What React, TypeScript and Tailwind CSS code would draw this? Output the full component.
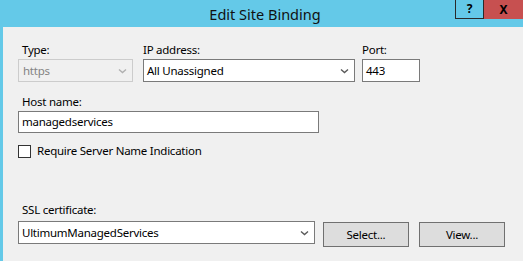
import React from "react";

const Chevron = ({ color = "#5a5a5a" }: { color?: string }) => (
  <svg width="9" height="6" viewBox="0 0 9 6" className="shrink-0">
    <path d="M1 1.5 L4.5 4.5 L8 1.5" fill="none" stroke={color} strokeWidth="1.4" />
  </svg>
);

export default function App() {
  return (
    <div
      className="w-[523px] h-[261px] bg-[#64c9e8] flex flex-col overflow-hidden text-[11.5px] tracking-[-0.25px] text-black"
      style={{ fontFamily: '"Noto Sans", "Segoe UI", sans-serif' }}
    >
      <div className="h-[27px] relative flex items-start justify-center shrink-0">
        <div className="text-[14.5px] tracking-normal leading-[20px] mt-[4px] ml-[7px] text-[#111]">Edit Site Binding</div>
        <div className="absolute right-0 top-0 flex h-[19px]">
          <div className="w-[29px] h-[19px] border-l border-b border-r border-[#2a2a2a] flex items-center justify-center font-bold text-[12px] leading-none">
            ?
          </div>
          <div className="w-[39px] h-[19px] bg-[#c75050] flex items-center justify-center font-bold text-[12px] leading-none">
            X
          </div>
        </div>
      </div>
      <div className="flex-1 ml-[3px] bg-[#f0f0f0] pl-[15px] pt-[15px] flex flex-col">
        <div className="flex">
          <div className="flex flex-col w-[115px]">
            <div className="leading-[16px] pl-[4px] mb-[1px]">Type:</div>
            <div className="h-[23px] border border-[#cccccc] bg-[#f0f0f0] flex items-center justify-between pl-[4px] pr-[5px] text-[#838383]">
              <span>https</span>
              <Chevron color="#b0b0b0" />
            </div>
          </div>
          <div className="flex flex-col w-[212px] ml-[10px]">
            <div className="leading-[16px] mb-[1px]">IP address:</div>
            <div className="h-[23px] border border-[#7a7a7a] bg-white flex items-center justify-between pl-[3px] pr-[5px]">
              <span>All Unassigned</span>
              <Chevron />
            </div>
          </div>
          <div className="flex flex-col w-[58px] ml-[7px]">
            <div className="leading-[16px] mb-[1px]">Port:</div>
            <div className="h-[23px] border border-[#7a7a7a] bg-white flex items-center pl-[3px]">443</div>
          </div>
        </div>
        <div className="leading-[16px] pl-[4px] mt-[12px] mb-[1px]">Host name:</div>
        <div className="w-[301px] h-[22px] border border-[#7a7a7a] bg-white flex items-center pl-[3px]">
          managedservices
        </div>
        <div className="flex items-center mt-[10px]">
          <div className="w-[13px] h-[13px] border border-[#333] bg-white" />
          <span className="ml-[6px] leading-[16px]">Require Server Name Indication</span>
        </div>
        <div className="leading-[16px] pl-[4px] mt-[43px] mb-[3px]">SSL certificate:</div>
        <div className="flex items-start">
          <div className="w-[297px] h-[23px] border border-[#7a7a7a] bg-white flex items-center justify-between pl-[3px] pr-[5px]">
            <span>UltimumManagedServices</span>
            <Chevron />
          </div>
          <div className="w-[86px] h-[25px] ml-[8px] mt-[1px] border border-[#707070] bg-[#dddddd] flex items-center justify-center">
            Select...
          </div>
          <div className="w-[86px] h-[25px] ml-[10px] mt-[1px] border border-[#707070] bg-[#dddddd] flex items-center justify-center">
            View...
          </div>
        </div>
      </div>
    </div>
  );
}
